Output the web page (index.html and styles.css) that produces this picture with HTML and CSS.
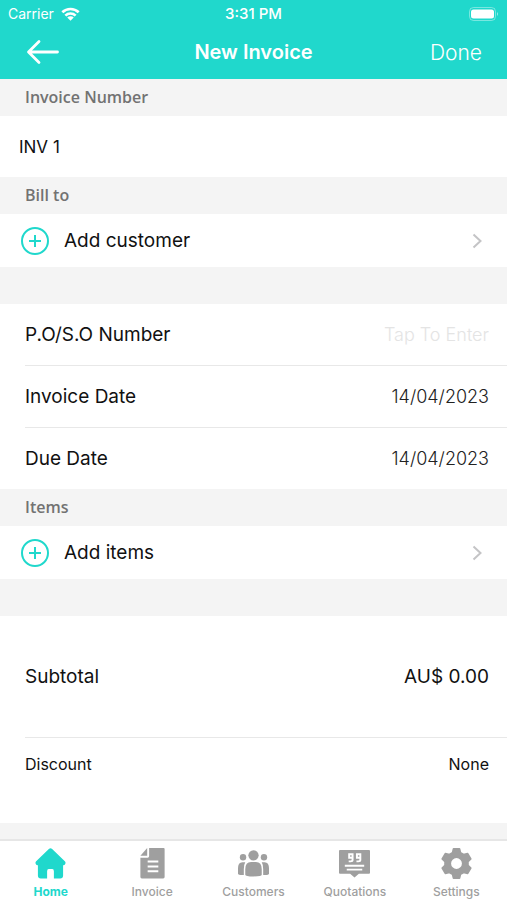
FILE: index.html
```html
<!DOCTYPE html>
<html lang="en">
<head>
<meta charset="utf-8">
<meta name="viewport" content="width=device-width, initial-scale=1">
<title>New Invoice</title>
<link rel="stylesheet" href="styles.css">
</head>
<body>
<header class="top">
  <div class="status">
    <span class="carrier">Carrier
      <svg class="wifi" viewBox="0 0 20 14" aria-hidden="true"><path d="M1.400 5.200a12.300 12.300 0 0 1 17.200 0M4.600 8.700a7.700 7.700 0 0 1 10.800 0" fill="none" stroke="currentColor" stroke-width="2.800"/><path d="M10 14 6.600 10.800a4.800 4.800 0 0 1 6.800 0z" fill="currentColor"/></svg>
    </span>
    <span class="clock">3:31 PM</span>
    <svg class="battery" viewBox="0 0 30 14" aria-hidden="true"><rect x=".5" y=".5" width="26" height="13" rx="4" fill="none" stroke="#fff" stroke-opacity=".4"/><rect x="2" y="2.500" width="23" height="9" rx="2.500" fill="#fff"/><path d="M28 5q2 2 0 4z" fill="#fff" fill-opacity=".55"/></svg>
  </div>
  <div class="nav">
    <button class="back" type="button" aria-label="Back">
      <svg viewBox="0 0 34 26" aria-hidden="true"><path d="M31.500 13H3M13 2.500 2.500 13 13 23.500" fill="none" stroke="currentColor" stroke-width="2.800" stroke-linecap="round" stroke-linejoin="round"/></svg>
    </button>
    <h1>New Invoice</h1>
    <button class="done" type="button">Done</button>
  </div>
</header>

<main>
  <h2><label for="number">Invoice Number</label></h2>
  <div class="group"><input class="number" id="number" type="text" value="INV 1"></div>

  <h2>Bill to</h2>
  <button class="add" type="button">
    <svg class="plus" viewBox="0 0 28 28" aria-hidden="true"><circle cx="14" cy="14" r="13"/><path d="M14 8v12M8 14h12"/></svg>
    <span>Add customer</span>
    <svg class="chevron" viewBox="0 0 10 16" aria-hidden="true"><path d="M1.500 1.500 8.500 8l-7 6.500"/></svg>
  </button>

  <div class="group spaced">
    <div class="row"><label for="po">P.O/S.O Number</label><input id="po" type="text" placeholder="Tap To Enter"></div>
    <div class="row"><label for="issued">Invoice Date</label><input id="issued" type="text" value="14/04/2023"></div>
    <div class="row"><label for="due">Due Date</label><input id="due" type="text" value="14/04/2023"></div>
  </div>

  <h2>Items</h2>
  <button class="add" type="button">
    <svg class="plus" viewBox="0 0 28 28" aria-hidden="true"><circle cx="14" cy="14" r="13"/><path d="M14 8v12M8 14h12"/></svg>
    <span>Add items</span>
    <svg class="chevron" viewBox="0 0 10 16" aria-hidden="true"><path d="M1.500 1.500 8.500 8l-7 6.500"/></svg>
  </button>

  <div class="group spaced">
    <div class="row subtotal"><span>Subtotal</span><span>AU$ 0.00</span></div>
    <button class="row discount" type="button"><span>Discount</span><span>None</span></button>
  </div>
</main>

<nav class="tabs" aria-label="Main">
  <a class="active" href="#home" aria-current="page">
    <svg viewBox="0 0 32 32" aria-hidden="true"><path d="M14.300 1.100Q16-.4 17.700 1.100L30.800 13.600q1.200 1.300.4 2.900-.7 1.300-2.200 1.200V28.500q0 3-3 3H19.500V24q0-2.300-1.700-2.300h-3.600q-1.700 0-1.700 2.300v7.500H6q-3 0-3-3V17.700q-1.500.1-2.200-1.200-.8-1.600.4-2.900z"/></svg>
    Home
  </a>
  <a href="#invoice">
    <svg viewBox="0 0 32 32" aria-hidden="true"><path d="M12.500 0H27.500Q28.500 0 28.500 1v29q0 1.500-1.500 1.500H5q-1.500 0-1.500-1.500V10h7.500q1.500 0 1.500-1.500z"/><path d="M10.500 0v8H3.500z"/><path d="M11 14H22M11 19H22M11 24H22" stroke="#fff" stroke-width="2"/></svg>
    Invoice
  </a>
  <a href="#customers">
    <svg viewBox="0 0 32 32" aria-hidden="true"><circle cx="16" cy="7.500" r="5.300"/><circle cx="5.200" cy="9.500" r="3.300"/><circle cx="26.800" cy="9.500" r="3.300"/><path d="M7.500 22q0-7.500 6-7.500h5q6 0 6 7.500v5.500q0 1.800-8.500 1.800t-8.500-1.800zM0 21q0-6.300 4.500-6.300H7.500Q6 17 6 22v5.800Q0 28 0 26.500zM32 21q0-6.300-4.500-6.300H24.500q1.500 2.300 1.500 7.300v5.800q6 .2 6-1.300z"/></svg>
    Customers
  </a>
  <a href="#quotations">
    <svg viewBox="0 0 32 32" aria-hidden="true"><path d="M1 2H31Q32 2 32 3V25.500q0 1-1 1H20.500L16 30.500l-4.500-4H1q-1 0-1-1V3Q0 2 1 2z"/><path d="M14 6.500h-3.500v3.500H14zv6q0 1.300-2 1.300h-2M22 6.500h-3.500v3.500H22zv6q0 1.300-2 1.300h-2" fill="none" stroke="#fff" stroke-width="2"/><path d="M6 18.300h20M8 22.300h16" stroke="#fff" stroke-width="2"/></svg>
    Quotations
  </a>
  <a href="#settings">
    <svg viewBox="0 0 32 32" aria-hidden="true"><path fill-rule="evenodd" d="M12.900 1H19.100L20.100 5 23.300 6.800 27.500 5.800 30.700 11.200 27.800 14.200V17.800L30.700 20.800 27.500 26.200 23.300 25.200 20.100 27 19.100 31H12.900L11.900 27 8.700 25.200 4.500 26.200 1.300 20.800 4.200 17.800V14.200L1.300 11.200 4.500 5.800 8.700 6.800 11.900 5zM16 9.500a6.500 6.500 0 1 0 0 13 6.500 6.500 0 0 0 0-13z" stroke="currentColor" stroke-width="1.800" stroke-linejoin="round"/></svg>
    Settings
  </a>
</nav>
</body>
</html>
```
FILE: styles.css
```css
* { box-sizing: border-box; }

body {
  margin: 0;
  min-height: 100vh;
  display: flex;
  flex-direction: column;
  background: #f4f4f4;
  color: #111;
  font-family: Inter, "Liberation Sans", sans-serif;
  font-size: 19px;
}

button, input {
  margin: 0;
  padding: 0;
  border: 0;
  background: none;
  color: inherit;
  font: inherit;
}

button { cursor: pointer; }

.top {
  background: #20d8cc;
  color: #fff;
}

.status {
  display: grid;
  grid-template-columns: 1fr auto 1fr;
  align-items: center;
  height: 27px;
  padding: 0 8px;
  font-size: 14px;
}

.carrier {
  display: flex;
  align-items: center;
  gap: 7px;
}

.wifi { width: 19px; height: 14px; }
.clock { font-size: 15px; font-weight: 500; }
.battery { width: 30px; height: 14px; justify-self: end; }

.nav {
  display: grid;
  grid-template-columns: 1fr auto 1fr;
  align-items: center;
  height: 52px;
  padding: 0 25px 2px;
}

.back {
  justify-self: start;
  width: 36px;
  height: 26px;
}

.back svg { display: block; width: 36px; height: 26px; }

.nav h1 {
  margin: 0;
  font-size: 20px;
  font-weight: 600;
}

.done {
  justify-self: end;
  font-size: 21px;
  font-weight: 300;
}

main { flex: 1; padding-bottom: 16px; }

h2 {
  margin: 0;
  padding: 0 25px;
  color: #727272;
  font-family: "Open Sans", "Noto Sans", sans-serif;
  font-size: 16px;
  font-weight: 600;
  line-height: 37px;
}

.group { background: #fff; }

.number {
  display: block;
  width: 100%;
  height: 61px;
  padding: 0 19px;
  font-size: 17px;
}

.add {
  display: flex;
  align-items: center;
  width: 100%;
  height: 53px;
  padding: 0 25px 0 21px;
  gap: 15px;
  background: #fff;
  text-align: left;
}

.add span { flex: 1; }

.plus {
  width: 28px;
  height: 28px;
  fill: none;
  stroke: #20d8cc;
  stroke-width: 2;
}

.chevron {
  width: 10px;
  height: 16px;
  fill: none;
  stroke: #c4c4c6;
  stroke-width: 2;
}

.spaced {
  margin-top: 37px;
  padding-left: 25px;
}

.row {
  display: flex;
  align-items: center;
  justify-content: space-between;
  width: 100%;
  height: 61px;
  padding-right: 18px;
}

.row + .row {
  height: 62px;
  border-top: 1px solid #e8e8e8;
}

.row input {
  flex: 1;
  min-width: 0;
  color: #222;
  font-size: 18px;
  font-weight: 300;
  text-align: right;
}

.row input::placeholder { color: #e4e4e4; opacity: 1; }

.row.subtotal { height: 121px; }

.row.discount {
  height: 86px;
  padding-bottom: 34px;
  font-size: 16px;
}

.tabs {
  position: sticky;
  bottom: 0;
  display: grid;
  grid-template-columns: repeat(5, 1fr);
  height: 61px;
  border-top: 2px solid #e6e6e6;
  background: #fff;
}

.tabs a {
  display: flex;
  flex-direction: column;
  align-items: center;
  gap: 5px;
  padding-top: 7px;
  color: #9f9f9f;
  font-size: 12px;
  font-weight: 500;
  line-height: 15px;
  text-decoration: none;
}

.tabs svg {
  width: 31px;
  height: 31px;
  fill: currentColor;
}

.tabs .active { color: #20d8cc; font-weight: 700; }
```
